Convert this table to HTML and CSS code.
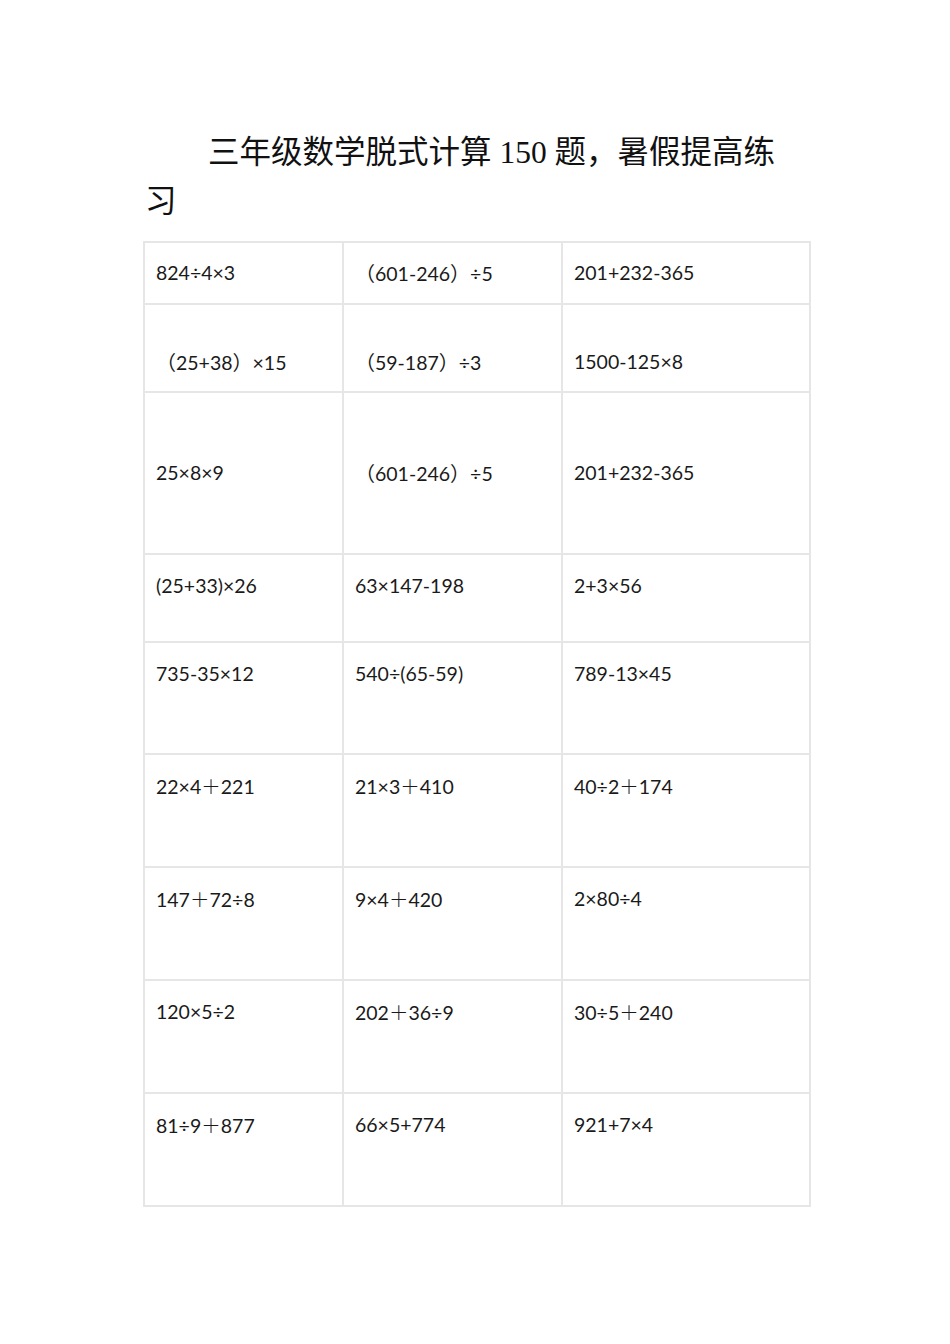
FILE: index.html
```html
<!DOCTYPE html>
<html lang="zh">
<head>
<meta charset="utf-8">
<title>三年级数学脱式计算150题</title>
<link rel="stylesheet" href="styles.css">
</head>
<body>
<div class="page">
  <h1 class="title">三年级数学脱式计算 150 题，暑假提高练习</h1>
  <table class="grid">
    <colgroup><col class="c1"><col class="c2"><col class="c3"></colgroup>
    <tr class="r1"><td>824÷4×3</td><td><span class="fw">（</span>601-246<span class="fw">）</span>÷5</td><td>201+232-365</td></tr>
    <tr class="r2"><td><span class="fw">（</span>25+38<span class="fw">）</span>×15</td><td><span class="fw">（</span>59-187<span class="fw">）</span>÷3</td><td>1500-125×8</td></tr>
    <tr class="r3"><td>25×8×9</td><td><span class="fw">（</span>601-246<span class="fw">）</span>÷5</td><td>201+232-365</td></tr>
    <tr class="r4"><td>(25+33)×26</td><td>63×147-198</td><td>2+3×56</td></tr>
    <tr class="r5"><td>735-35×12</td><td>540÷(65-59)</td><td>789-13×45</td></tr>
    <tr class="r6"><td>22×4<span class="fp">＋</span>221</td><td>21×3<span class="fp">＋</span>410</td><td>40÷2<span class="fp">＋</span>174</td></tr>
    <tr class="r6"><td>147<span class="fp">＋</span>72÷8</td><td>9×4<span class="fp">＋</span>420</td><td>2×80÷4</td></tr>
    <tr class="r6"><td>120×5÷2</td><td>202<span class="fp">＋</span>36÷9</td><td>30÷5<span class="fp">＋</span>240</td></tr>
    <tr class="r6"><td>81÷9<span class="fp">＋</span>877</td><td>66×5+774</td><td>921+7×4</td></tr>
  </table>
</div>
</body>
</html>
```
FILE: styles.css
```css
html, body {
  margin: 0;
  padding: 0;
  background: #ffffff;
}
.page {
  width: 950px;
  height: 1344px;
  padding: 128px 0 0 143px;
  box-sizing: border-box;
}
.title {
  margin: 0 0 15px 2px;
  width: 650px;
  font-family: "Liberation Serif", "Noto Sans CJK SC", serif;
  font-weight: normal;
  font-size: 31.5px;
  line-height: 49px;
  text-indent: 63px;
  color: #111;
}
.grid {
  border-collapse: collapse;
  font-family: Lato, "Noto Sans CJK SC", sans-serif;
  font-size: 19.5px;
  color: #1a1a1a;
  table-layout: fixed;
}
.c1 { width: 199px; }
.c2 { width: 219px; }
.c3 { width: 248px; }
.grid td {
  border: 2px solid #e6e6e6;
  padding: 0 0 0 11px;
  vertical-align: top;
  line-height: 24px;
  white-space: nowrap;
}
.r1 td { height: 60px; vertical-align: middle; padding-top: 0; }
.r2 td { height: 88px; vertical-align: top; padding-top: 45px; box-sizing: border-box; }
.r3 td { height: 160px; vertical-align: middle; }
.r4 td { height: 88px; padding-top: 19px; box-sizing: border-box; }
.r5 td { height: 112px; padding-top: 19px; box-sizing: border-box; }
.r6 td { height: 113px; padding-top: 19px; box-sizing: border-box; }
.fw {
  font-family: "Noto Sans CJK SC", sans-serif;
  font-size: 20px;
}
.fp {
  font-family: "Noto Sans CJK SC", sans-serif;
  font-weight: 300;
}
```
